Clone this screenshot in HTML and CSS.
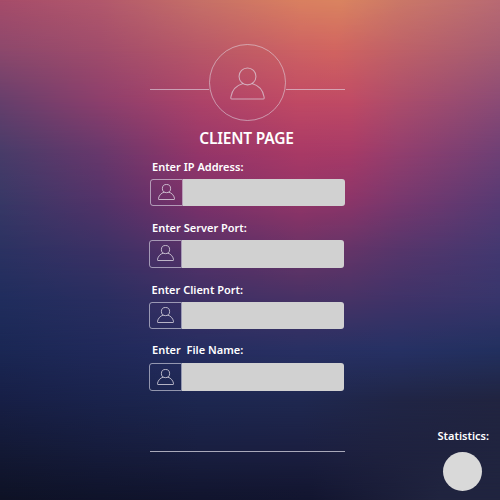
FILE: index.html
```html
<!DOCTYPE html>
<html lang="en">
<head>
<meta charset="utf-8">
<title>Client Page</title>
<link rel="stylesheet" href="styles.css">
</head>
<body>
<svg class="symbols" aria-hidden="true">
  <symbol id="person" viewBox="0 0 36 34">
    <circle cx="18" cy="9.7" r="8.7"/>
    <path d="M13.5 17.1C7 18.9 2.200 24 1 30.500Q0.300 33 1.800 33H34.200Q35.700 33 35 30.500C33.800 24 29 18.900 22.500 17.100"/>
  </symbol>
</svg>
<div class="backdrop">
  <div class="band b0"></div>
  <div class="band b1"></div>
  <div class="band b2"></div>
  <div class="band b3"></div>
  <div class="band b4"></div>
  <div class="band b5"></div>
  <div class="band b6"></div>
  <div class="band b7"></div>
  <div class="band b8"></div>
  <div class="band b9"></div>
  <div class="band b10"></div>
</div>
<main class="page">
  <section class="panel">
    <header class="head">
      <span class="rule"></span>
      <span class="avatar"><svg><use href="#person"/></svg></span>
      <span class="rule"></span>
    </header>
    <h1>CLIENT PAGE</h1>
    <form>
      <div class="field ip">
        <label for="ip">Enter IP Address:</label>
        <div class="control"><span class="icon"><svg><use href="#person"/></svg></span><input id="ip" type="text"></div>
      </div>
      <div class="field server">
        <label for="server">Enter Server Port:</label>
        <div class="control"><span class="icon"><svg><use href="#person"/></svg></span><input id="server" type="text"></div>
      </div>
      <div class="field client">
        <label for="client">Enter Client Port:</label>
        <div class="control"><span class="icon"><svg><use href="#person"/></svg></span><input id="client" type="text"></div>
      </div>
      <div class="field file">
        <label for="file">Enter&nbsp; File Name:</label>
        <div class="control"><span class="icon"><svg><use href="#person"/></svg></span><input id="file" type="text"></div>
      </div>
    </form>
    <hr>
  </section>
  <aside class="stats">
    <span>Statistics:</span>
    <div class="dot"></div>
  </aside>
</main>
</body>
</html>
```
FILE: styles.css
```css
* { box-sizing: border-box; }

body {
  margin: 0;
  width: 500px;
  height: 500px;
  overflow: hidden;
  color: #fff;
  font-family: "Noto Sans", sans-serif;
  font-weight: 600;
}

/* Mesh gradient: every band fades in over the one above it. */
.backdrop { position: absolute; inset: 0; z-index: -1; overflow: hidden; }
.band {
  position: absolute;
  inset: 0;
  -webkit-mask-image: linear-gradient(transparent var(--from), #000 calc(var(--from) + 50px));
  mask-image: linear-gradient(transparent var(--from), #000 calc(var(--from) + 50px));
}
.b0 { --from: -50px; background: linear-gradient(90deg, #a64c6a, #b2586c 20%, #c67068 40%, #da8060 60%, #da8460 68%, #cb7868 80%, #b96a73); }
.b1 { --from: 0px; background: linear-gradient(90deg, #8c486c, #a04c6b 20%, #b85868 40%, #cd6263 60%, #d16460 67%, #be6168 80%, #a55c72); }
.b2 { --from: 50px; background: linear-gradient(90deg, #673f6c, #8d3f6c 20%, #ad4369 40%, #c14a64 60%, #c04b65 70%, #ac4d6b 80%, #8c4b75); }
.b3 { --from: 100px; background: linear-gradient(90deg, #493c69, #69386c 20%, #963669 40%, #aa3a66 60%, #a83b67 70%, #943f6e 80%, #704075); }
.b4 { --from: 150px; background: linear-gradient(90deg, #383866, #533369 20%, #7e316a 40%, #933467 60%, #8c3569 70%, #78386e 80%, #583a73); }
.b5 { --from: 200px; background: linear-gradient(90deg, #2b3262, #3b3165 20%, #583168 40%, #6a3366 60%, #643468 70%, #56356b 80%, #433870); }
.b6 { --from: 250px; background: linear-gradient(90deg, #202d5d, #292e60 20%, #3d3065 40%, #473265 60%, #463366 70%, #3f3368 80%, #37356b); }
.b7 { --from: 300px; background: linear-gradient(90deg, #1a2754, #20295a 20%, #262d60 40%, #283063 60%, #263164 80%, #22305f); }
.b8 { --from: 350px; background: linear-gradient(90deg, #171f46, #1a234c 20%, #1d2750 40%, #1f2850 60%, #202545 80%, #212440); }
.b9 { --from: 400px; background: linear-gradient(90deg, #131935, #161c3c 20%, #191f41 40%, #1b1f41 60%, #1e213f 75%, #20243f); }
.b10 { --from: 450px; background: linear-gradient(90deg, #0e1225, #0f132a 20%, #11142d 40%, #12152f 62%, #191c37 75%, #20243f 88%, #20243f); }

.page { display: flex; height: 500px; }
.panel { width: 195px; margin-left: 150px; padding-top: 43px; }

.head { display: flex; height: 79px; }
.rule { flex: 1; height: 1px; margin-top: 46px; background: rgba(225, 220, 230, .6); }
.avatar {
  display: flex;
  justify-content: center;
  width: 77px;
  height: 77px;
  margin-top: 1px;
  padding-top: 22px;
  border: 1px solid rgba(225, 220, 230, .55);
  border-radius: 50%;
}
.avatar svg { width: 35px; height: 33px; }
.symbols { position: absolute; width: 0; height: 0; }
svg { fill: none; stroke: #e1dce6; stroke-opacity: .65; stroke-width: 1.1; }

h1 {
  margin: 7px 0 0;
  padding-right: 2px;
  font-size: 15.5px;
  font-weight: 570;
  letter-spacing: -.2px;
  line-height: 19px;
  text-align: center;
  white-space: nowrap;
}

form { padding-top: 11px; }
.field { height: 61px; margin-left: -1px; }
.field.ip { margin-left: 0; }
.field.server { height: 62px; }
label { display: block; height: 20px; padding-left: 3px; font-size: 11px; line-height: 16px; white-space: nowrap; }
.ip label { padding-left: 2px; }
.client label { padding-left: 2.5px; }
.file label { line-height: 14px; }
.control { display: flex; width: 195px; height: 27px; }
.server .control, .file .control { height: 28px; }
.icon {
  display: flex;
  justify-content: center;
  width: 33px;
  padding: 4px 1px 0 0;
  border: 1px solid rgba(225, 225, 235, .6);
  border-radius: 3px 0 0 3px;
}
.client .icon, .server .icon, .file .icon { padding-right: 0; }
.file .icon { padding-top: 5px; }
.icon svg { width: 17px; height: 16px; stroke-width: 2.1; stroke-opacity: .8; }
input {
  width: 162px;
  padding: 0 6px;
  border: 0;
  border-radius: 0 3px 3px 0;
  background: #d1d1d1;
  font: inherit;
  font-size: 11px;
}
hr { height: 1px; margin: 47px 0 0; border: 0; background: #a9a9ba; }

.stats { width: 53px; margin: 428px 0 0 92.5px; font-size: 11px; line-height: 16px; white-space: nowrap; }
.dot { width: 39px; height: 39px; margin: 8px 0 0 5.5px; border-radius: 50%; background: #d9d9d9; }
```
